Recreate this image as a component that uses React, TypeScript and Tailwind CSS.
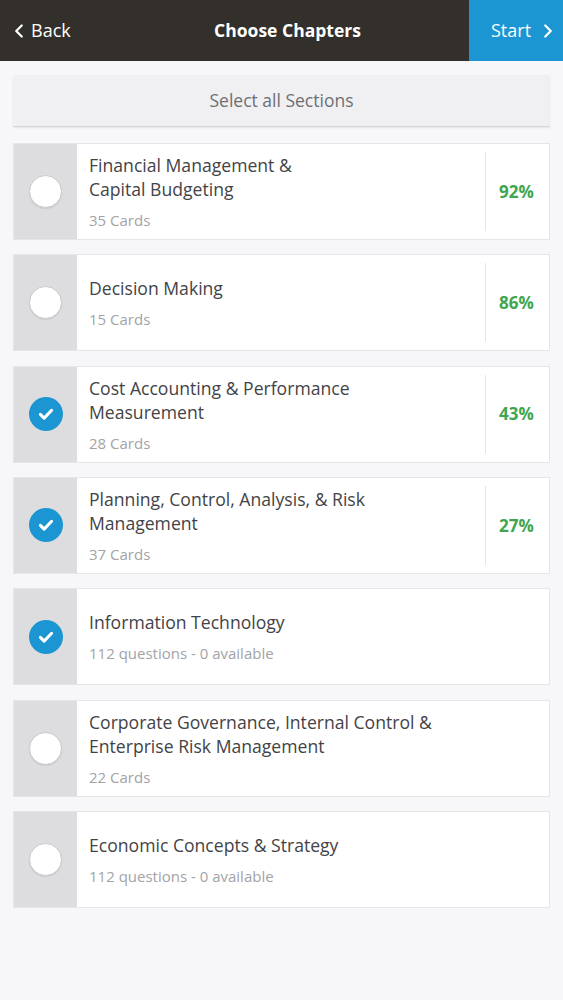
import { ChevronLeft, ChevronRight } from "lucide-react";

type Chapter = {
  title: string[];
  sub: string;
  checked: boolean;
  pct?: string;
};

const chapters: Chapter[] = [
  { title: ["Financial Management &", "Capital Budgeting"], sub: "35 Cards", checked: false, pct: "92%" },
  { title: ["Decision Making"], sub: "15 Cards", checked: false, pct: "86%" },
  { title: ["Cost Accounting & Performance", "Measurement"], sub: "28 Cards", checked: true, pct: "43%" },
  { title: ["Planning, Control, Analysis, & Risk", "Management"], sub: "37 Cards", checked: true, pct: "27%" },
  { title: ["Information Technology"], sub: "112 questions - 0 available", checked: true },
  { title: ["Corporate Governance, Internal Control &", "Enterprise Risk Management"], sub: "22 Cards", checked: false },
  { title: ["Economic Concepts & Strategy"], sub: "112 questions - 0 available", checked: false },
];

function Check({ checked }: { checked: boolean }) {
  if (checked) {
    return (
      <div className="w-[34px] h-[34px] rounded-full bg-[#1b96d2] flex items-center justify-center">
        <svg width="18" height="18" viewBox="0 0 24 24" fill="none">
          <path d="M4.5 12.5l5 5L19.5 7" stroke="white" strokeWidth="4" strokeLinecap="round" strokeLinejoin="round" />
        </svg>
      </div>
    );
  }
  return <div className="w-[33px] h-[33px] rounded-full bg-white border border-[#c9c9cc] shadow-[0_1px_1px_rgba(0,0,0,0.08)]" />;
}

export default function App() {
  return (
    <div className="min-h-[1000px] bg-[#f7f7f9]" style={{ fontFamily: '"Open Sans", "Noto Sans", sans-serif' }}>
      {/* Header */}
      <div className="h-[61px] bg-[#33302c] flex items-stretch">
        <div className="w-[100px] flex items-center pl-[8px] text-white text-[18px]">
          <ChevronLeft size={22} strokeWidth={2.5} />
          <span className="ml-[1px]">Back</span>
        </div>
        <div className="flex-1 flex items-center justify-center text-white font-bold text-[17.5px] pl-[6px]">
          Choose Chapters
        </div>
        <div className="w-[94px] bg-[#1b96d2] flex items-center pl-[22px] text-white text-[18px]">
          <span>Start</span>
          <ChevronRight size={22} strokeWidth={2.5} className="ml-[6px]" />
        </div>
      </div>

      <div className="px-[13px] pt-[14px] flex flex-col">
        <div className="h-[52px] bg-[#f0f0f2] border-b border-[#d6d6d9] shadow-[0_1px_2px_rgba(0,0,0,0.08)] rounded-[2px] flex items-center justify-center text-[17.5px] text-[#6f6f73]">
          Select all Sections
        </div>

        <div className="mt-[16px] flex flex-col gap-[14.33px]">
          {chapters.map((c, i) => (
            <div key={i} className="h-[97px] flex bg-white border border-[#e6e6e9]">
              <div className="w-[63px] bg-[#dddddf] flex items-center justify-center">
                <Check checked={c.checked} />
              </div>
              <div className="flex-1 flex flex-col justify-center pl-[12px]">
                <div className="text-[17.6px] leading-[24px] text-[#434346]">
                  {c.title.map((t, j) => (
                    <div key={j}>{t}</div>
                  ))}
                </div>
                <div className="mt-[9px] text-[15px] leading-[20px] text-[#a3a3a6]">{c.sub}</div>
              </div>
              {c.pct && (
                <div className="w-[64px] flex items-center my-[8px] border-l border-[#e6e6e9] justify-center">
                  <span className="text-[17px] font-bold text-[#3ea64f] -ml-[2px]">{c.pct}</span>
                </div>
              )}
            </div>
          ))}
        </div>
      </div>
    </div>
  );
}
